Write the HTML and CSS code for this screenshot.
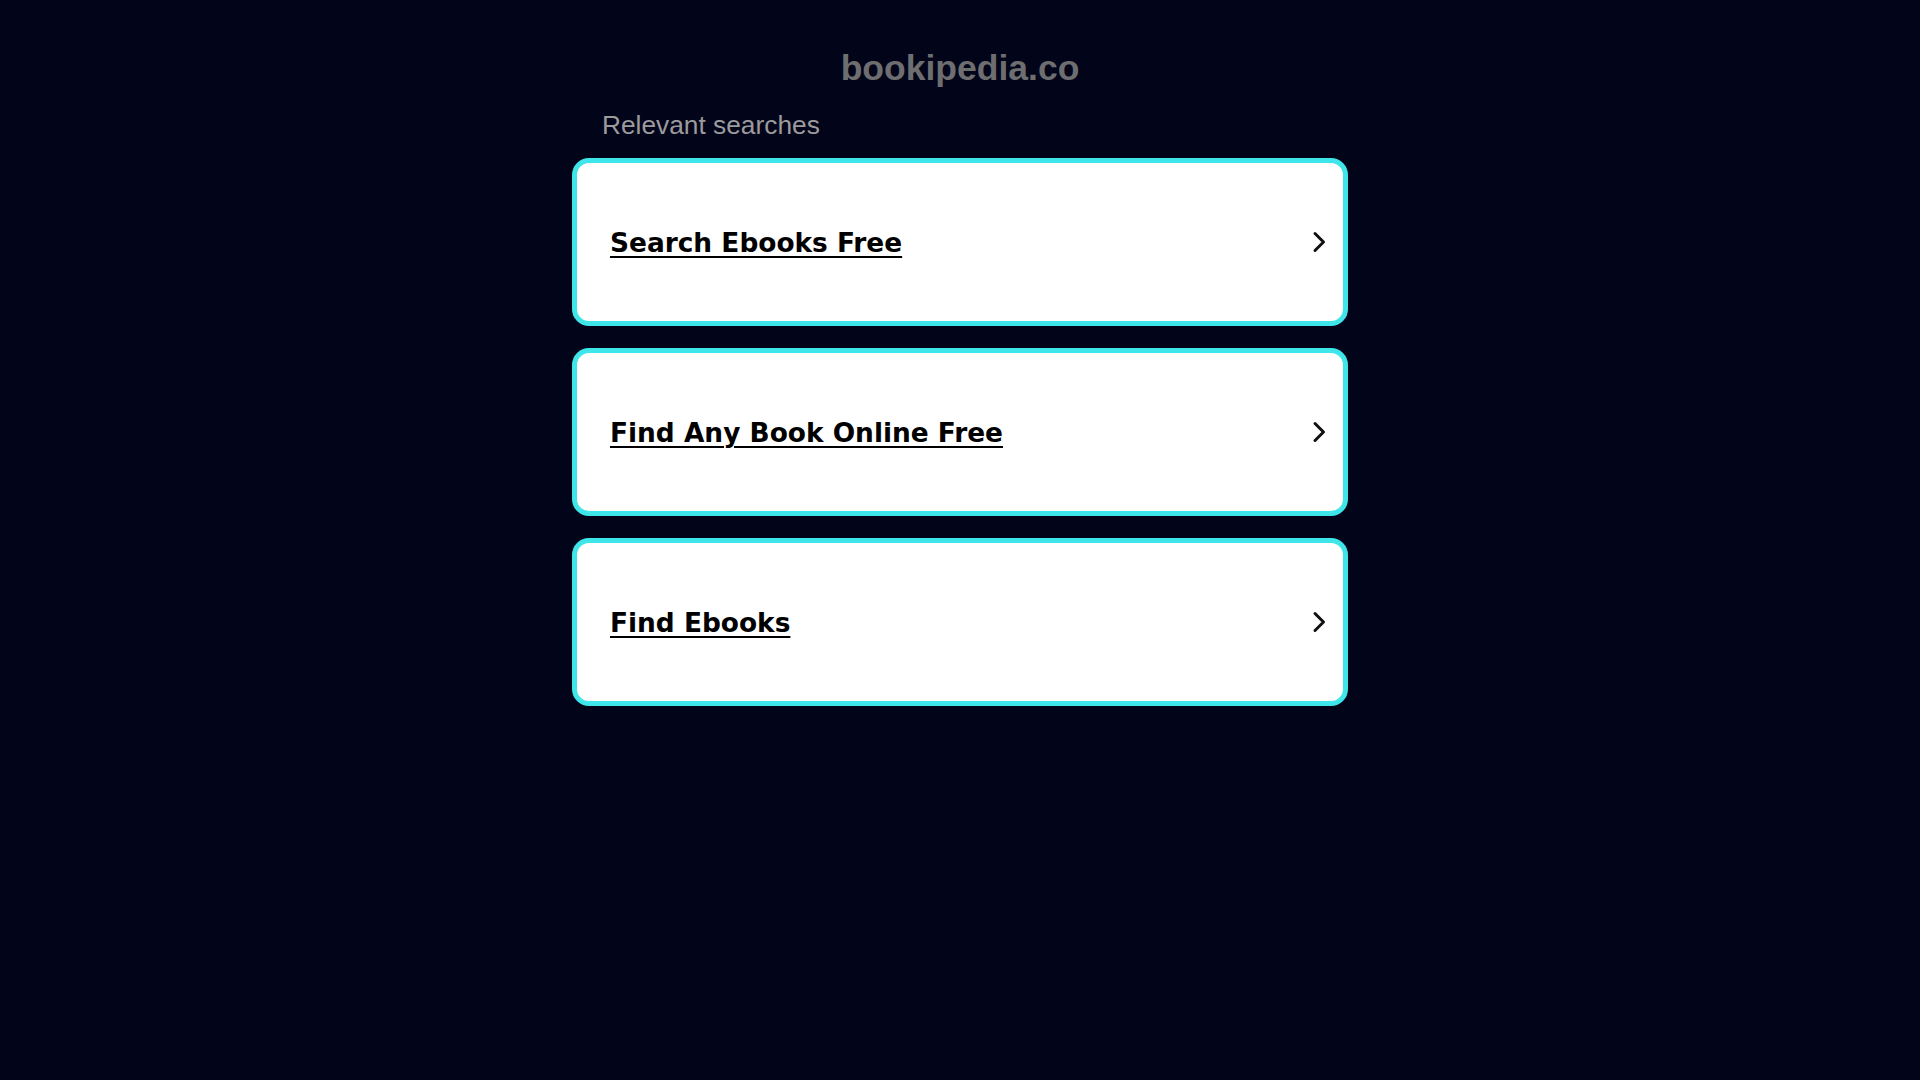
FILE: index.html
```html
<!DOCTYPE html>
<html lang="en">
<head>
<meta charset="utf-8">
<title>bookipedia.co</title>
<link rel="stylesheet" href="styles.css">
</head>
<body>
<main class="wrap">
  <h1 class="domain">bookipedia.co</h1>
  <p class="label">Relevant searches</p>
  <ul class="list">
    <li class="card"><a class="card-link" href="#">Search Ebooks Free</a><svg class="chev" viewBox="0 0 14 22" width="14" height="22"><polyline points="3,2.5 11.5,11 3,19.5" fill="none" stroke="#111" stroke-width="3" stroke-linecap="round" stroke-linejoin="round"/></svg></li>
    <li class="card"><a class="card-link" href="#">Find Any Book Online Free</a><svg class="chev" viewBox="0 0 14 22" width="14" height="22"><polyline points="3,2.5 11.5,11 3,19.5" fill="none" stroke="#111" stroke-width="3" stroke-linecap="round" stroke-linejoin="round"/></svg></li>
    <li class="card"><a class="card-link" href="#">Find Ebooks</a><svg class="chev" viewBox="0 0 14 22" width="14" height="22"><polyline points="3,2.5 11.5,11 3,19.5" fill="none" stroke="#111" stroke-width="3" stroke-linecap="round" stroke-linejoin="round"/></svg></li>
  </ul>
</main>
</body>
</html>
```
FILE: styles.css
```css
html, body {
  margin: 0;
  padding: 0;
  background: #02041a;
  min-height: 100%;
}
body {
  font-family: "Liberation Sans", Arial, sans-serif;
}
.wrap {
  width: 776px;
  margin: 0 auto;
  padding-top: 48px;
}
.domain {
  margin: 0;
  text-align: center;
  font-size: 35.5px;
  font-weight: bold;
  color: #6e6e70;
  line-height: normal;
}
.label {
  margin: 21px 0 0 30px;
  font-size: 26.3px;
  color: #9b9b9d;
  line-height: normal;
}
.list {
  list-style: none;
  margin: 17px 0 0 0;
  padding: 0;
  display: flex;
  flex-direction: column;
  gap: 22px;
}
.card {
  box-sizing: border-box;
  height: 168px;
  background: #ffffff;
  border: 5px solid #3fe6e9;
  border-radius: 17px;
  display: flex;
  align-items: center;
  justify-content: space-between;
  padding: 0 17px 0 33px;
}
.card-link {
  font-family: "DejaVu Sans", Verdana, sans-serif;
  font-weight: bold;
  font-size: 26.4px;
  color: #000;
  text-decoration: underline;
  text-decoration-thickness: 2px;
  text-underline-offset: 4px;
}
.chev {
  display: block;
}
```
